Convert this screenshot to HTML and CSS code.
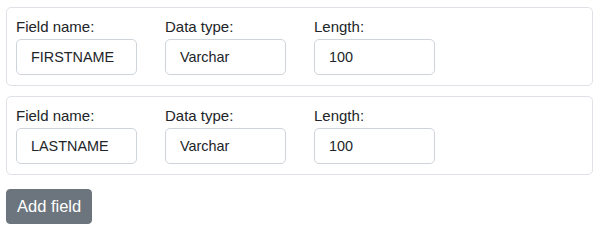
FILE: index.html
```html
<!DOCTYPE html>
<html>
<head>
<meta charset="utf-8">
<link rel="stylesheet" href="styles.css">
</head>
<body>
<div class="page">
  <div class="card">
    <div class="field">
      <label class="label">Field name:</label>
      <div class="input">FIRSTNAME</div>
    </div>
    <div class="field">
      <label class="label">Data type:</label>
      <div class="input">Varchar</div>
    </div>
    <div class="field">
      <label class="label">Length:</label>
      <div class="input">100</div>
    </div>
  </div>
  <div class="card">
    <div class="field">
      <label class="label">Field name:</label>
      <div class="input">LASTNAME</div>
    </div>
    <div class="field">
      <label class="label">Data type:</label>
      <div class="input">Varchar</div>
    </div>
    <div class="field">
      <label class="label">Length:</label>
      <div class="input">100</div>
    </div>
  </div>
  <button class="btn">Add field</button>
</div>
</body>
</html>
```
FILE: styles.css
```css
html, body {
  margin: 0;
  padding: 0;
  background: #ffffff;
}
.page {
  padding: 7px 7px 0 6px;
  font-family: "Liberation Sans", Arial, sans-serif;
  color: #212529;
}
.card {
  display: flex;
  gap: 28px;
  border: 1px solid #dee2e6;
  border-radius: 5px;
  padding: 9px 9px 10px 9px;
  margin-bottom: 10px;
}
.field {
  display: flex;
  flex-direction: column;
  gap: 2px;
  width: 121px;
}
.label {
  font-size: 15px;
  line-height: 20px;
}
.input {
  box-sizing: border-box;
  height: 36px;
  border: 1px solid #ced4da;
  border-radius: 5px;
  padding: 0 14px;
  font-size: 14.4px;
  line-height: 34px;
  color: #212529;
}
.btn {
  margin-top: 4px;
  height: 35px;
  padding: 0 10px;
  border: 1px solid #6c757d;
  border-radius: 4px;
  background: #6c757d;
  color: #ffffff;
  font-family: "Liberation Sans", Arial, sans-serif;
  font-size: 16.5px;
}
```
